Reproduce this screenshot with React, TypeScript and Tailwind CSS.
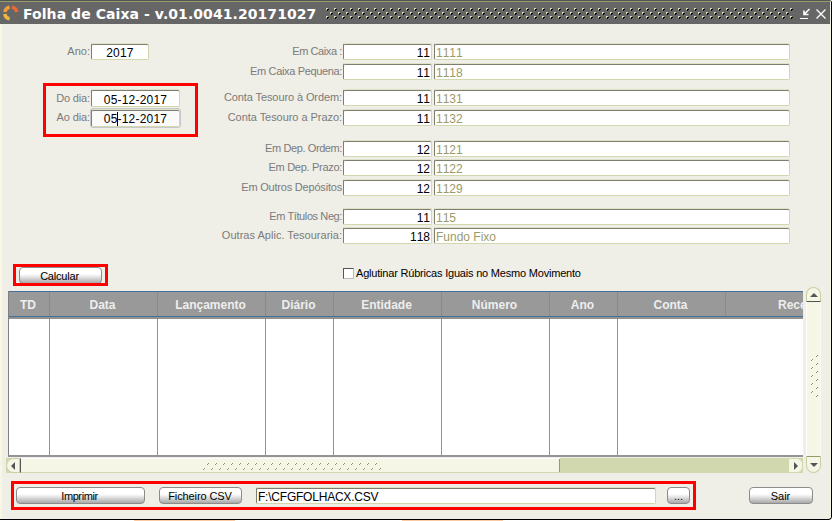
import React from "react";

type Row = { label: string; code: string; name: string; gap: string; h: string; track: string };

const rows: Row[] = [
  { label: "Em Caixa :", code: "11", name: "1111", gap: "mt-0", h: "h-[17px]", track: "tracking-[-0.4px]" },
  { label: "Em Caixa Pequena:", code: "11", name: "1118", gap: "mt-[3px]", h: "h-[17px]", track: "tracking-[-0.35px]" },
  { label: "Conta Tesouro à Ordem:", code: "11", name: "1131", gap: "mt-[9px]", h: "h-[17px]", track: "tracking-[-0.1px]" },
  { label: "Conta Tesouro a Prazo:", code: "11", name: "1132", gap: "mt-[3px]", h: "h-[17px]", track: "tracking-[-0.05px]" },
  { label: "Em Dep. Ordem:", code: "12", name: "1121", gap: "mt-[14px]", h: "h-[17px]", track: "tracking-[-0.4px]" },
  { label: "Em Dep. Prazo:", code: "12", name: "1122", gap: "mt-[2px]", h: "h-[17px]", track: "tracking-[-0.3px]" },
  { label: "Em Outros Depósitos", code: "12", name: "1129", gap: "mt-[3px]", h: "h-[17px]", track: "tracking-[-0.2px]" },
  { label: "Em Títulos Neg:", code: "11", name: "115", gap: "mt-[12px]", h: "h-[17px]", track: "tracking-[-0.4px]" },
  { label: "Outras Aplic. Tesouraria:", code: "118", name: "Fundo Fixo", gap: "mt-[2px]", h: "h-[17px]", track: "tracking-[0.02px]" },
];

const columns = [
  { label: "TD", w: "w-[41px]" },
  { label: "Data", w: "w-[108px]" },
  { label: "Lançamento", w: "w-[108px]" },
  { label: "Diário", w: "w-[68px]" },
  { label: "Entidade", w: "w-[108px]" },
  { label: "Número", w: "w-[108px]" },
  { label: "Ano", w: "w-[68px]" },
  { label: "Conta", w: "w-[108px]" },
];

const field =
  "box-border flex shrink-0 items-center rounded-[2px] border border-t-[#dfe2c8] border-l-[#7d7d70] border-r-[#d2d8ae] border-b-[#d2d8ae] bg-white text-[12px] leading-[14px] whitespace-pre overflow-hidden shadow-[inset_0_1px_#7d7d70] [font-kerning:none]";
const label = "shrink-0 text-right text-[11px] leading-[13px] text-[#7b7b7b] whitespace-pre";

function Button({ children, className }: { children: React.ReactNode; className: string }) {
  return (
    <div
      className={
        "box-border flex shrink-0 items-center justify-center rounded-[4px] border border-[#8c8c8c] bg-linear-to-b from-white from-40% via-[#e4e4e4] via-60% to-[#a9a9a9] text-[11px] leading-[13px] text-black " +
        className
      }
    >
      <span className="pt-[2px]">{children}</span>
    </div>
  );
}

function Logo() {
  return (
    <svg width="16" height="16" viewBox="0 0 16 16" fill="none" strokeWidth="3.4">
      <path d="M1.8 7A6 6 0 0 1 6.6 2.1" stroke="#ef9f3c" />
      <path d="M9 2.1A6 6 0 0 1 13.8 7" stroke="#e96a35" />
      <path d="M1.8 9A6 6 0 0 0 6.6 13.9" stroke="#f0b83e" />
      <path d="M13.8 9A6 6 0 0 1 11.6 12.5" stroke="#8a6252" strokeWidth="1" />
    </svg>
  );
}

function TitleDots() {
  return (
    <svg className="mt-[1px] shrink-0" width="468" height="11" shapeRendering="crispEdges">
      <defs>
        <pattern id="dots" width="8" height="8" patternUnits="userSpaceOnUse">
          <path d="M0 0h2v1h-1v1h-1zM4 4h2v1h-1v1h-1z" fill="#d6daae" />
          <path d="M1 1h2v1h-1v1h-1zM5 5h2v1h-1v1h-1z" fill="#000" />
        </pattern>
      </defs>
      <rect width="468" height="11" fill="url(#dots)" />
    </svg>
  );
}

function Grip({ vertical }: { vertical?: boolean }) {
  const marks: [number, number][] = [];
  if (vertical) {
    for (let i = 0; i < 6; i++) marks.push([5, i * 8]);
    for (let i = 0; i < 5; i++) marks.push([0, 4 + i * 8]);
  } else {
    for (let i = 0; i < 22; i++) marks.push([4 + i * 8, 0], [i * 8, 5]);
    marks.push([176, 5]);
  }
  return (
    <svg width={vertical ? 8 : 182} height={vertical ? 44 : 8} shapeRendering="crispEdges">
      {marks.map(([x, y]) => (
        <g key={x + "-" + y}>
          <path d={`M${x} ${y}h2v1h-1v1h-1z`} fill="#fff" />
          <path d={`M${x + 1} ${y}h1v1h-1v1h-1v-1h1z`} fill="#8f9560" />
        </g>
      ))}
    </svg>
  );
}

export default function App() {
  return (
    <div
      className="flex h-[521px] w-[833px] flex-col overflow-hidden bg-white"
      style={{ fontFamily: '"Liberation Sans", Arial, sans-serif' }}
    >
      <div className="flex h-[520px] w-[832px] shrink-0 flex-col overflow-hidden rounded-tr-[3px] rounded-br-[4px] border-r border-b border-black bg-[#efeee7]">
        <header className="flex h-6 w-[830px] shrink-0 items-start border-t border-[#555] bg-[#666]">
          <div className="flex h-[23px] w-full items-center border-t border-[#989c67] pl-[3px]">
            <Logo />
            <h1 className="ml-[4px] w-[303px] shrink-0 pt-[2px] font-['DejaVu_Sans'] text-[14px] leading-4 font-bold tracking-[0.07px] whitespace-pre text-white">
              Folha de Caixa - v.01.0041.20171027
            </h1>
            <TitleDots />
            <svg className="mt-px ml-[6px] shrink-0" width="28" height="12" viewBox="0 0 28 12" fill="none" stroke="#fff" strokeWidth="1.3">
              <path d="M9.500 1L4.500 6M4 2.500V6.500H8.500" strokeWidth="1.6" />
              <path d="M0 10.500h8" strokeWidth="1" />
              <path d="M16.500 1.500l9 9M25.500 1.500l-9 9" />
            </svg>
          </div>
        </header>

        <main className="flex w-[831px] grow flex-col border-r border-l-2 border-[#f7f7e4]">
          <section className="flex h-[240px] shrink-0">
            <div className="flex w-[198px] shrink-0 flex-col pt-[19px]">
              <div className="flex h-[17px]">
                <span className={label + " w-[88px] pt-[2px]"}>Ano:</span>
                <div className={field + " ml-px w-[58px] justify-center pt-[2px] tracking-[0.2px]"}>2017</div>
              </div>
              <div className="mt-[23px] ml-[41px] h-[54px] w-[155px] border-[3px] border-[#fe0000] pt-[3px]">
                <div className="flex h-[18px]">
                  <span className={label + " w-[45px] pt-[3px] pr-px tracking-[-0.15px]"}>Do dia:</span>
                  <div className={field + " h-[18px] w-[89px] justify-center pt-[3px] tracking-[0.2px]"}>05-12-2017</div>
                </div>
                <div className="flex">
                  <span className={label + " w-[44px] pt-[4px] tracking-[-0.1px]"}>Ao dia:</span>
                  <div className="mt-px rounded-[3px] border border-[#c8c8c8]">
                    <div className={field + " h-[18px] w-[89px] justify-center bg-[#fafafa]! pt-[2px] tracking-[0.2px]"}>
                      05<span className="-mx-[0.5px] h-[14px] w-px bg-black" />-12-2017
                    </div>
                  </div>
                </div>
              </div>
            </div>

            <div className="flex flex-col pt-[19px]">
              {rows.map((r) => (
                <div key={r.label} className={"flex " + r.gap + " " + r.h}>
                  <span className={label + " w-[142px] pt-[2px] " + r.track}>{r.label}</span>
                  <div className={field + " ml-px w-[89px] justify-end pt-[2px] pr-px " + r.h}>{r.code}</div>
                  <div className={field + " ml-[2px] w-[356px] pt-[2px] pl-[1px] text-[#9b9a68] " + r.h}>{r.name}</div>
                </div>
              ))}
            </div>
          </section>

          <section className="flex h-[23px] shrink-0">
            <div className="ml-[11px] h-[22px] w-[95px] overflow-hidden border-[3px] border-[#fe0000] pl-[3px]">
              <Button className="h-[17px] w-[83px] pr-[2px] tracking-[-0.2px]">Calcular</Button>
            </div>
            <div className="mt-1 ml-[235px] h-[11px] w-[11px] border border-t-[#555] border-l-[#555] border-r-[#bbb] border-b-[#bbb] bg-white" />
            <span className="mt-[3px] ml-[2px] text-[11px] leading-[13px] tracking-[-0.2px] whitespace-pre text-black">
              Aglutinar Rúbricas Iguais no Mesmo Movimento
            </span>
          </section>

          <section className="flex h-[187px] shrink-0">
            <div className="flex w-[799px] flex-col pl-1">
              <div className="mt-1 mb-px ml-[2px] flex h-[166px] w-[795px] flex-col overflow-hidden border-l border-b-2 border-l-[#808080] border-b-[#929495] bg-white">
                <div className="flex h-[26px] shrink-0 border-t border-b border-[#446f9f] bg-[#999] text-[12px] font-bold text-[#eee]">
                  {columns.map((c) => (
                    <div key={c.label} className={"flex shrink-0 items-center justify-center border-r border-[#8589a0] pr-[2px] pt-px " + c.w}>
                      {c.label}
                    </div>
                  ))}
                  <div className="flex w-[108px] shrink-0 items-center pt-px pl-[52px]">Recebido</div>
                </div>
                <div className="h-[2px] shrink-0 bg-[#92928e]" />
                <div className="flex grow">
                  {columns.slice(0, 7).map((c) => (
                    <div key={c.label} className={"shrink-0 border-r border-[#92939f] " + c.w} />
                  ))}
                </div>
              </div>
              <div className="flex h-[15px] w-[797px] bg-[#d2d8ae]">
                <div className="flex h-[15px] w-[14px] items-center justify-center rounded-l-lg border border-[#c8cfa1] bg-[#f5f6e5]">
                  <span className="h-0 w-0 border-y-4 border-r-4 border-y-transparent border-r-[#555]" />
                </div>
                <div className="flex h-[15px] w-[540px] border-t border-b border-l border-t-white border-b-[#d2d8ae] border-l-[#555] bg-[#f5f6e5] pt-1 pl-[182px] shadow-[inset_-1px_0_#969b68]">
                  <Grip />
                </div>
                <div className="ml-auto flex h-[15px] w-[15px] items-center justify-center rounded-r-md border border-[#d2d8ae] bg-[#f5f6e5]">
                  <span className="h-0 w-0 border-y-4 border-l-4 border-y-transparent border-l-[#555]" />
                </div>
              </div>
            </div>
            <div className="ml-[5px] flex h-[187px] w-[15px] flex-col">
              <div className="flex h-[15px] items-center justify-center rounded-t-lg border border-b border-[#c8cfa1] border-b-[#555] bg-[#f5f6e5]">
                <span className="h-0 w-0 border-x-4 border-b-4 border-x-transparent border-b-[#555]" />
              </div>
              <div className="flex h-[155px] justify-center border-x border-b border-l-white border-r-[#fcfcf5] border-b-[#969b68] bg-[#f5f6e5] pt-[53px] pl-[2px]">
                <Grip vertical />
              </div>
              <div className="flex h-[16px] items-center justify-center rounded-b-lg border border-t-0 border-[#c8cfa1] bg-[#f5f6e5]">
                <span className="h-0 w-0 border-x-4 border-t-4 border-x-transparent border-t-[#555]" />
              </div>
            </div>
          </section>

          <footer className="mt-[7px] flex shrink-0">
            <div className="ml-[9px] flex h-[29px] w-[685px] border-[3px] border-[#fe0000] pt-[3px]">
              <Button className="ml-[2px] h-[17px] w-[129px] pr-[2px] tracking-[-0.4px]">Imprimir</Button>
              <Button className="ml-[14px] h-[17px] w-[83px] pr-px tracking-[-0.1px]">Ficheiro CSV</Button>
              <div className={field + " ml-[14px] h-[17px] w-[400px] pt-[2px] pl-px tracking-[-0.22px]"}>F:\CFGFOLHACX.CSV</div>
              <Button className="ml-[11px] h-[17px] w-[23px]">...</Button>
            </div>
            <Button className="mt-[6px] ml-[53px] h-[17px] w-[64px] pr-px">Sair</Button>
          </footer>
        </main>
      </div>
      <div className="flex h-px shrink-0">
        <span className="ml-[134px] w-[101px] bg-[#fbc9a2]" />
        <span className="ml-[167px] w-[101px] bg-[#fbc9a2]" />
      </div>
    </div>
  );
}
